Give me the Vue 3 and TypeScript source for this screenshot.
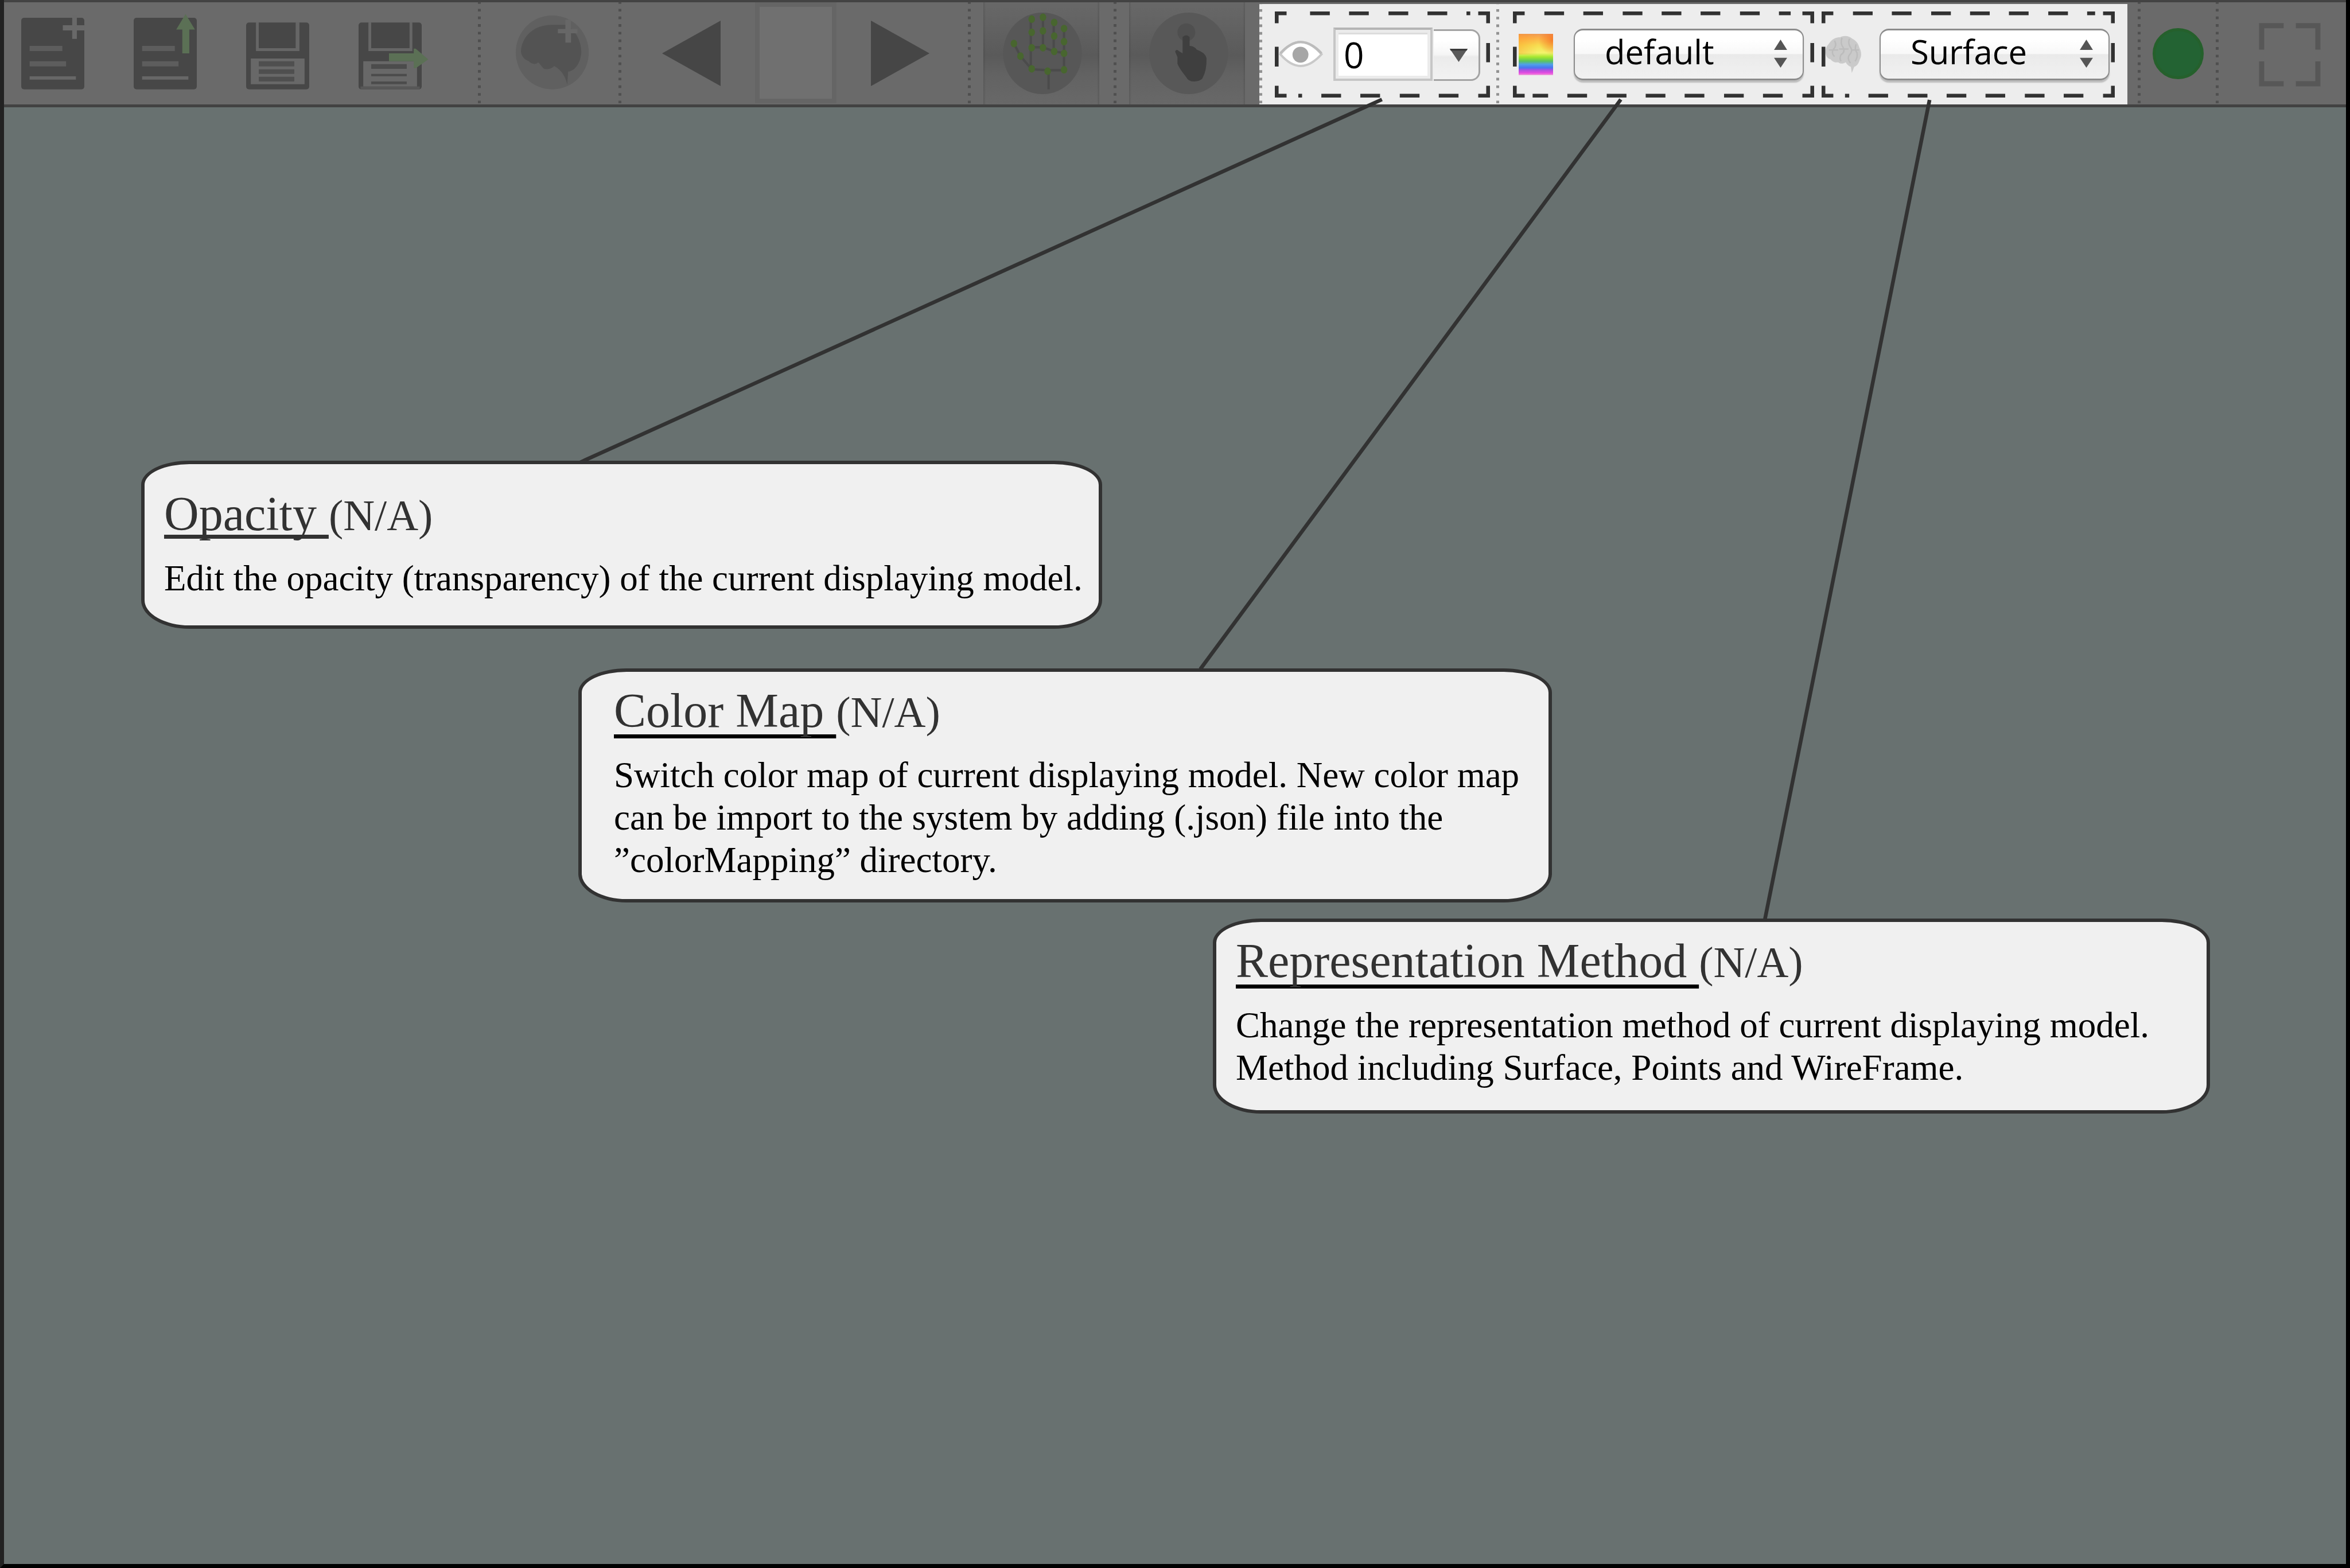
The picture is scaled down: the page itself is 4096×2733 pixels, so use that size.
<script setup lang="ts">
import { ref } from 'vue'

interface Frame {
  width: number
  topStart: number
  topEnd: number
  bottomStart: number
  bottomEnd: number
}

interface Callout {
  id: string
  title: string
  lines: string[]
}

const opacity = ref('0')
const colorMap = ref('default')
const representation = ref('Surface')

const frames: Record<string, Frame> = {
  opacity: { width: 458, topStart: 75, topEnd: 416, bottomStart: 67, bottomEnd: 408 },
  colorMap: { width: 642, topStart: 67, topEnd: 592, bottomStart: 67, bottomEnd: 600 },
  method: { width: 626, topStart: 67, topEnd: 584, bottomStart: 67, bottomEnd: 576 },
}

const FRAME_HEIGHT = 183

/* Builds the dashed outline of a tool group: corners, side ticks and the dashes between. */
function framePath(f: Frame): string {
  const w = f.width
  const h = FRAME_HEIGHT
  const l = 4
  const r = w - 4
  const t = 4
  const b = h - 4
  const parts = [
    `M${l} 25V${t}H25`,
    `M${w - 25} ${t}H${r}V25`,
    `M${r} ${h - 25}V${b}H${w - 25}`,
    `M25 ${b}H${l}V${h - 25}`,
    `M${l} 75V117`,
    `M${r} 67V108`,
  ]
  const period = 250 / 3
  for (let x = f.topStart; x < f.topEnd; x += period) {
    parts.push(`M${Math.round(x)} ${t}H${Math.round(Math.min(x + 42, f.topEnd))}`)
  }
  for (let x = f.bottomStart; x < f.bottomEnd; x += period) {
    parts.push(`M${Math.round(w - x)} ${b}H${Math.round(w - Math.min(x + 42, f.bottomEnd))}`)
  }
  return parts.join('')
}

const joints: [number, number][] = [
  [2199, 41], [2223, 37], [2247, 48], [2268, 61],
  [2199, 69], [2223, 66], [2247, 77], [2268, 89],
  [2199, 102], [2223, 102], [2247, 110], [2268, 114],
  [2161, 93], [2175, 120], [2199, 147], [2233, 152], [2268, 149],
]

const callouts: Callout[] = [
  {
    id: 'opacity',
    title: 'Opacity',
    lines: ['Edit the opacity (transparency) of the current displaying model.'],
  },
  {
    id: 'color-map',
    title: 'Color Map',
    lines: [
      'Switch color map of current displaying model. New color map',
      'can be import to the system by adding (.json) file into the',
      '”colorMapping” directory.',
    ],
  },
  {
    id: 'method',
    title: 'Representation Method',
    lines: [
      'Change the representation method of current displaying model.',
      'Method including Surface, Points and WireFrame.',
    ],
  },
]
</script>

<template>
  <div class="page">
    <header class="toolbar">
      <div class="group files">
        <button type="button" class="tool file" aria-label="New file">
          <svg viewBox="46 5 135 218">
            <rect x="46" y="38" width="135" height="153" rx="6" fill="#474747" />
            <path d="M155 34h10v49h-10zM135 54h47v11h-47z" fill="#696969" />
            <path d="M64 98h70v11H64zM64 131h78v11H64z" fill="#5d5d5d" />
            <path d="M64 163h99v7H64z" fill="#676767" />
          </svg>
        </button>
        <button type="button" class="tool file" aria-label="Load file">
          <svg viewBox="285 5 135 218">
            <rect x="285" y="38" width="135" height="153" rx="6" fill="#474747" />
            <path d="M303 98h70v11h-70zM303 131h78v11h-78z" fill="#5d5d5d" />
            <path d="M303 163h99v7h-99z" fill="#676767" />
            <path d="M396 30l20 33h-12v51h-15V63h-13z" fill="#5b7055" />
          </svg>
        </button>
        <button type="button" class="tool file" aria-label="Save">
          <svg viewBox="525 5 135 218">
            <rect x="525" y="48" width="135" height="143" rx="6" fill="#474747" />
            <path d="M546 47h6v56h79V47h8v62h-93z" fill="#666" />
            <path d="M535 125h115v55H535z" fill="#686868" />
            <path d="M552 131h76v11h-76zM552 148h76v10h-76zM552 164h76v10h-76z" fill="#4f4f4f" />
          </svg>
        </button>
        <button type="button" class="tool file" aria-label="Save as">
          <svg viewBox="764 5 135 218">
            <rect x="764" y="48" width="135" height="143" rx="6" fill="#474747" />
            <path d="M785 47h6v56h82V47h6v62h-94z" fill="#666" />
            <path d="M774 131h115v54H774z" fill="#686868" />
            <path d="M768 185h127v6H768z" fill="#575757" />
            <path d="M791 137h76v10h-76zM791 158h76v5h-76zM791 174h76v6h-76z" fill="#4c4c4c" />
            <path d="M829 114h53v-10h4l27 23-27 19h-4v-15h-53z" fill="#5b7055" />
          </svg>
        </button>
      </div>

      <svg class="sep" viewBox="0 15 18 654" preserveAspectRatio="none"><path d="M9 8V669" /></svg>

      <div class="group brain">
        <button type="button" class="tool round" aria-label="Add brain model">
          <svg viewBox="1099 5 157 218">
            <ellipse cx="1177" cy="112" rx="78" ry="79" fill="#606060" />
            <path
              d="M1110 110C1112 76 1140 52 1178 53H1206C1228 64 1239 90 1239 110C1239 132 1226 152 1211 153L1209 181C1206 166 1198 150 1181 141C1176 147 1164 150 1158 146L1147 133C1142 139 1132 137 1127 131C1115 126 1111 118 1110 110Z"
              fill="#535353"
            />
            <path d="M1205 42h12v49h-12zM1189 62h42v9h-42z" fill="#676767" />
          </svg>
        </button>
      </div>

      <svg class="sep" viewBox="0 15 18 654" preserveAspectRatio="none"><path d="M9 8V669" /></svg>

      <div class="group pager">
        <button type="button" class="tool step" aria-label="Previous">
          <svg viewBox="1411 5 125 218"><path d="M1411 114L1536 44V184Z" fill="#464646" /></svg>
        </button>
        <input class="frame-number" type="text" aria-label="Frame number" />
        <button type="button" class="tool step" aria-label="Next">
          <svg viewBox="1857 5 125 218"><path d="M1982 114L1857 44V184Z" fill="#464646" /></svg>
        </button>
      </div>

      <svg class="sep" viewBox="0 15 18 654" preserveAspectRatio="none"><path d="M9 8V669" /></svg>

      <div class="group mode">
        <button type="button" class="tool toggle" aria-label="Hand tracking">
          <svg viewBox="2096 5 247 218">
            <ellipse cx="2222" cy="114" rx="84" ry="87" fill="#575757" />
            <path
              d="M2197 41V147M2223 37V102M2246 48V110M2268 61V149M2199 101H2223L2247 110L2268 113M2161 93L2175 120L2199 148L2233 150H2268M2235 152V191"
              fill="none"
              stroke="#4b4b4b"
              stroke-width="5"
            />
            <ellipse v-for="(j, i) in joints" :key="i" :cx="j[0]" :cy="j[1]" rx="7" ry="8" fill="#48662f" />
          </svg>
        </button>
      </div>

      <svg class="sep" viewBox="0 15 18 654" preserveAspectRatio="none"><path d="M9 8V669" /></svg>

      <div class="group mode">
        <button type="button" class="tool toggle" aria-label="Touch control">
          <svg viewBox="2406 5 247 218">
            <ellipse cx="2533" cy="114" rx="84" ry="87" fill="#585858" />
            <circle cx="2528" cy="69" r="19" fill="#4f4f4f" />
            <path
              d="M2520 79Q2528 72 2535 79V98Q2545 98 2550 106Q2568 112 2571 124Q2572 150 2562 168Q2556 174 2545 174Q2532 174 2528 165Q2512 145 2509 136V122L2504 110Q2507 104 2512 109L2520 114Z"
              fill="#3f3f3f"
            />
          </svg>
        </button>
      </div>

      <div class="highlight">
        <svg class="sep light" viewBox="0 24 18 645" preserveAspectRatio="none"><path d="M9 8V669" /></svg>

        <div class="field opacity">
          <svg class="dashes" :viewBox="`0 0 ${frames.opacity.width} 183`" preserveAspectRatio="none">
            <path :d="framePath(frames.opacity)" />
          </svg>
          <label for="opacity" aria-label="Opacity">
            <svg class="eye" viewBox="0 0 94 60">
              <path d="M3 30Q46-22 91 30Q46 80 3 30Z" fill="#fff" stroke="#c9c9c9" stroke-width="5" />
              <path d="M3 28Q46-20 91 28" fill="none" stroke="#bcbcbc" stroke-width="5" />
              <ellipse cx="46" cy="31" rx="17" ry="17" fill="#a6a6a6" />
            </svg>
          </label>
          <div class="combo">
            <input id="opacity" v-model="opacity" type="text" />
            <button type="button" aria-label="Show opacity values">
              <svg viewBox="0 0 38 28"><path d="M0 0H38L19 28Z" fill="#5a5a5a" /><path d="M0 0H38L36 4H2Z" fill="#3a3a3a" /></svg>
            </button>
          </div>
        </div>

        <svg class="sep light" viewBox="0 24 18 645" preserveAspectRatio="none"><path d="M9 8V669" /></svg>

        <div class="field color-map">
          <svg class="dashes" :viewBox="`0 0 ${frames.colorMap.width} 183`" preserveAspectRatio="none">
            <path :d="framePath(frames.colorMap)" />
          </svg>
          <label for="color-map" aria-label="Color map"><span class="rainbow"></span></label>
          <div class="popup">
            <select id="color-map" v-model="colorMap">
              <option>default</option>
            </select>
            <svg class="arrows" viewBox="0 0 28 60"><path d="M14 0L28 22H0ZM0 39H28L14 60Z" fill="#555" /></svg>
          </div>
        </div>

        <div class="field method">
          <svg class="dashes" :viewBox="`0 0 ${frames.method.width} 183`" preserveAspectRatio="none">
            <path :d="framePath(frames.method)" />
          </svg>
          <label for="method" aria-label="Representation method">
            <svg class="cortex" viewBox="0 0 78 82">
              <path
                d="M1 38C0 26 6 22 10 16C16 8 24 5 32 5C40 0 52 2 58 8C66 12 71 18 73 27C78 36 78 46 74 52C72 60 68 66 62 68L57 81L55 68C50 66 46 62 44 58C38 62 32 62 28 58C22 60 14 56 12 52C5 50 2 46 1 38Z"
                fill="#cacaca"
              />
              <path
                d="M20 12Q26 22 18 30Q12 38 20 46M36 6Q32 18 38 26Q44 36 34 42Q30 50 34 56M52 8Q48 18 54 26Q60 34 52 42Q46 50 54 60M66 20Q62 30 68 38Q70 48 64 56M8 32H28M30 30H50M56 32H72"
                fill="none"
                stroke="#bcbcbc"
                stroke-width="3"
              />
            </svg>
          </label>
          <div class="popup">
            <select id="method" v-model="representation">
              <option>Surface</option>
              <option>Points</option>
              <option>WireFrame</option>
            </select>
            <svg class="arrows" viewBox="0 0 28 60"><path d="M14 0L28 22H0ZM0 39H28L14 60Z" fill="#555" /></svg>
          </div>
        </div>
      </div>

      <div class="group status">
        <svg class="sep" viewBox="0 15 18 654" preserveAspectRatio="none"><path d="M9 8V669" /></svg>
        <span class="lamp" role="img" aria-label="Connected"></span>
        <svg class="sep" viewBox="0 15 18 654" preserveAspectRatio="none"><path d="M9 8V669" /></svg>
      </div>

      <button type="button" class="tool fullscreen" aria-label="Full screen">
        <svg viewBox="4814 5 132 218">
          <path
            d="M4820 106V55H4867M4893 55H4940V106M4940 131V179H4893M4867 179H4820V131"
            fill="none"
            stroke="#575757"
            stroke-width="11"
          />
        </svg>
      </button>
    </header>

    <main class="stage">
      <section v-for="c in callouts" :key="c.id" class="callout" :class="c.id">
        <h2><span class="name">{{ c.title }}&nbsp;</span><span class="key">(N/A)</span></h2>
        <p>
          <template v-for="(line, i) in c.lines" :key="i"><br v-if="i > 0" />{{ line }}</template>
        </p>
      </section>
    </main>

    <svg class="leaders" viewBox="0 0 5008 3342" aria-hidden="true">
      <path d="M2945 212L1237 985M3454 212L2558 1426M4112 213L3761 1960" />
    </svg>
  </div>
</template>

<style>
body {
  margin: 0;
  background: #000;
}
</style>

<style scoped>
.page {
  position: relative;
  box-sizing: border-box;
  min-height: 100vh;
  display: flex;
  flex-direction: column;
  border-left: 7px solid #222;
  border-right: 7px solid #000;
  border-bottom: 7px solid #000;
  background: #687170;
}

.toolbar {
  display: flex;
  height: 178px;
  border-top: 4px solid #434343;
  border-bottom: 5px solid #424242;
  background: #6a6a6a;
}

.toolbar svg {
  display: block;
  overflow: visible;
}

.group {
  box-sizing: border-box;
  display: flex;
  flex: none;
}

.tool {
  flex: none;
  height: 178px;
  padding: 0;
  border: 0;
  background: none;
}

.tool svg {
  width: 100%;
  height: 178px;
}

.toolbar .sep {
  flex: none;
  width: 5px;
  height: 178px;
  overflow: hidden;
}

.sep path {
  stroke: #4f4f4f;
  stroke-width: 18;
  stroke-dasharray: 17 32;
}

.files {
  width: 826px;
  padding-left: 30px;
  gap: 86px;
}

.file {
  width: 110px;
}

.brain {
  width: 240px;
  padding-left: 61px;
}

.round {
  width: 128px;
}

.pager {
  width: 604px;
  padding-left: 71px;
  gap: 60px;
}

.step {
  width: 102px;
}

.frame-number {
  box-sizing: border-box;
  width: 142px;
  height: 176px;
  padding: 0;
  border: 8px solid #656565;
  background: #707070;
  color: #333;
  font: 58px "Open Sans", sans-serif;
}

.mode {
  width: 249px;
  padding-left: 22px;
}

.toggle {
  box-sizing: border-box;
  width: 202px;
  background:
    linear-gradient(90deg, rgba(0, 0, 0, 0.12), transparent 4px, transparent 198px, rgba(0, 0, 0, 0.12)),
    linear-gradient(#686868, #606060 30%, #5a5a5a 52%, #626262 70%, #686868);
}

.highlight {
  box-sizing: border-box;
  flex: none;
  display: flex;
  align-items: center;
  width: 1513px;
  height: 175px;
  margin-top: 3px;
  background: #ededed;
}

.highlight .sep {
  height: 175px;
}

.light path {
  stroke: #929292;
}

.field {
  position: relative;
  box-sizing: border-box;
  flex: none;
  display: flex;
  align-items: center;
  height: 150px;
}

.dashes {
  position: absolute;
  inset: 0;
  width: 100%;
  height: 100%;
  pointer-events: none;
}

.dashes path {
  fill: none;
  stroke: #323232;
  stroke-width: 8;
}

.opacity.field {
  width: 375px;
  margin: 0 11px 0 22px;
  padding-left: 7px;
}

.color-map.field {
  width: 525px;
  margin: 0 13px 0 24px;
  padding-left: 10px;
}

.method.field {
  width: 511px;
  padding-left: 6px;
}

.eye {
  width: 77px;
  height: 49px;
}

.combo {
  display: flex;
  align-items: flex-end;
  gap: 2px;
  margin-left: 18px;
}

.combo input {
  box-sizing: border-box;
  width: 173px;
  height: 93px;
  padding: 0 0 0 14px;
  border: 4px solid #c6c6c6;
  border-top-color: #b4b4b4;
  box-shadow: inset 0 0 0 5px #ebebeb, inset 0 8px 0 #dcdcdc;
  background: #fff;
  color: #000;
  font: 500 62px/80px "Open Sans", sans-serif;
}

.combo button {
  box-sizing: border-box;
  display: flex;
  align-items: center;
  justify-content: center;
  width: 81px;
  height: 90px;
  padding: 0 0 0 8px;
  border: 3px solid #a3a3a3;
  border-left: 0;
  border-radius: 0 16px 16px 0;
  background: linear-gradient(#fff 20%, #f6f6f6 48%, #ebebeb 54%, #f2f2f2);
}

.combo button svg {
  width: 31px;
  height: 23px;
}

.rainbow {
  display: block;
  width: 60px;
  height: 72px;
  background:
    radial-gradient(ellipse at 100% 15%, rgba(244, 100, 30, 0.7), transparent 30%),
    linear-gradient(90deg, rgba(255, 140, 30, 0.35), transparent 55%) top / 100% 50% no-repeat,
    linear-gradient(#ee9a55, #fdb047 10%, #f7dd50 28%, #f3f36c 46%, #a4e72f 56%, #5dc45c 66%, #4fa0e8 74%, #4a74f0 82%, #b04fe0 88%, #e84ce0 95%, #eea0d8);
}

.popup {
  position: relative;
  margin-left: 36px;
}

.method .popup {
  margin-left: 31px;
}

.popup select {
  display: block;
  box-sizing: border-box;
  width: 401px;
  height: 90px;
  padding: 0 0 10px 52px;
  border: 2px solid #8c8c8c;
  border-top-width: 3px;
  border-bottom-width: 3px;
  border-radius: 16px;
  appearance: none;
  background: linear-gradient(#fff 20%, #f8f8f8 48%, #eaeaea 50%, #f1f1f1);
  box-shadow: 0 4px 2px #bdbdbd;
  color: #000;
  font: 500 58px/74px "Open Sans", sans-serif;
}

.arrows {
  position: absolute;
  right: 29px;
  top: 19px;
  width: 23px;
  height: 49px;
  pointer-events: none;
}

.cortex {
  width: 64px;
  height: 67px;
}

.status {
  align-items: center;
  gap: 21px;
  padding-left: 18px;
}

.lamp {
  box-sizing: border-box;
  width: 89px;
  height: 89px;
  border: 5px solid #25602c;
  border-radius: 50%;
  background: #236333;
}

.fullscreen {
  width: 108px;
  margin: 0 44px 0 auto;
}

.stage {
  flex: 1;
  display: flex;
  flex-direction: column;
  align-items: flex-start;
  padding-top: 616px;
}

.callout {
  box-sizing: border-box;
  border: 6px solid #323232;
  border-radius: 84px 84px 84px 84px / 42px 42px 50px 50px;
  background: #f0f0f0;
  font-family: "Liberation Serif", serif;
}

.callout.opacity {
  width: 1675px;
  margin-left: 239px;
  padding: 41px 0 45px 34px;
}

.callout.color-map {
  width: 1697px;
  margin: 69px 0 0 1001px;
  padding: 22px 0 31px 56px;
}

.callout.method {
  width: 1738px;
  margin: 28px 0 0 2107px;
  padding: 22px 0 37px 34px;
}

.callout h2 {
  margin: 0 0 29px;
  height: 92px;
  color: #323232;
  font-size: 84px;
  font-weight: 400;
  line-height: 92px;
  white-space: nowrap;
}

.name {
  text-decoration: underline #000 7px;
  text-decoration-skip-ink: none;
  text-underline-offset: 13px;
}

.opacity .name {
  text-decoration-color: #323232;
  text-underline-offset: 8px;
}

.key {
  font-size: 76px;
}

.callout p {
  margin: 0;
  color: #000;
  font-size: 63px;
  line-height: 74px;
  white-space: nowrap;
}

.leaders {
  position: absolute;
  top: 0;
  left: -7px;
  width: calc(100% + 14px);
  pointer-events: none;
}

.leaders path {
  fill: none;
  stroke: #323232;
  stroke-width: 8;
}
</style>
